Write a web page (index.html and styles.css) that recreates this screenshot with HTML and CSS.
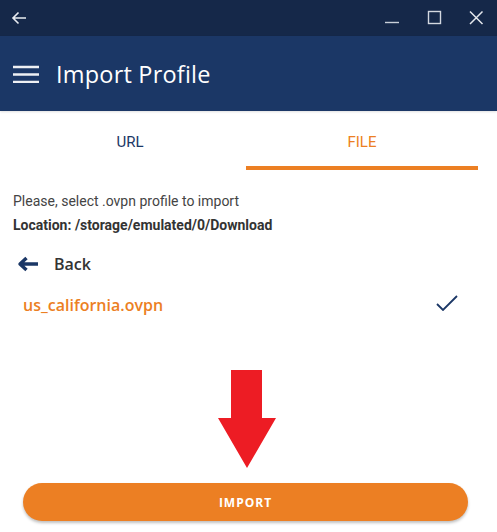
FILE: index.html
```html
<!DOCTYPE html>
<html>
<head>
<meta charset="utf-8">
<link rel="stylesheet" href="styles.css">
</head>
<body>
<div class="app">
  <div class="titlebar">
    <svg class="tb-back" width="16" height="14" viewBox="0 0 16 14"><path d="M15 7H2M7.5 1.5L2 7l5.5 5.5" fill="none" stroke="#e8ebf0" stroke-width="1.6"/></svg>
    <div class="tb-controls">
      <svg width="16" height="16" viewBox="0 0 16 16"><path d="M1 12.5h14" stroke="#c9cfd9" stroke-width="1.4"/></svg>
      <svg width="16" height="16" viewBox="0 0 16 16"><rect x="2.5" y="1.5" width="12" height="12" fill="none" stroke="#d3d8e0" stroke-width="1.4"/></svg>
      <svg width="16" height="16" viewBox="0 0 16 16"><path d="M2 1.5l12.5 12.5M14.5 1.5L2 14" stroke="#e4e7ec" stroke-width="1.5"/></svg>
    </div>
  </div>
  <div class="appbar">
    <svg class="menu" width="26" height="18" viewBox="0 0 26 18"><path d="M0 2h26M0 9.5h26M0 17h26" stroke="#eef0f4" stroke-width="2.6"/></svg>
    <h1 class="title">Import Profile</h1>
  </div>
  <div class="tabs">
    <div class="tab">URL</div>
    <div class="tab active">FILE</div>
  </div>
  <div class="content">
    <p class="hint">Please, select .ovpn profile to import</p>
    <p class="location">Location: /storage/emulated/0/Download</p>
    <div class="back-row">
      <svg width="22" height="16" viewBox="0 0 22 16"><path d="M21 8H4M9.5 2L3 8l6.5 6" fill="none" stroke="#1b3766" stroke-width="3.4" stroke-linejoin="round"/></svg>
      <span>Back</span>
    </div>
    <div class="file-row">
      <span class="file-name">us_california.ovpn</span>
      <svg class="check" width="22" height="16" viewBox="0 0 22 16"><path d="M1 9l6 6L21 1" fill="none" stroke="#1b3766" stroke-width="1.8"/></svg>
    </div>
  </div>
  <div class="pointer">
    <svg width="60" height="100" viewBox="0 0 60 100"><path d="M14 0h31v48h14L30 98 1 48h13z" fill="#ed1c24"/></svg>
  </div>
  <div class="actions">
    <button class="import">IMPORT</button>
  </div>
</div>
</body>
</html>
```

FILE: styles.css
```css
* { box-sizing: border-box; }
html, body { margin: 0; padding: 0; background: #fff; }
body { font-family: Roboto, "Noto Sans", sans-serif; }
.app { height: 532px; display: flex; flex-direction: column; }
.titlebar {
  height: 36px; background: #152849;
  display: flex; align-items: center; justify-content: space-between;
  padding: 0 13px 0 11px;
}
.tb-controls { display: flex; gap: 26px; align-items: center; }
.appbar {
  height: 75px; background: #1b3766;
  display: flex; align-items: center; gap: 17px;
  padding: 0 13px;
  box-shadow: 0 1px 2px rgba(0,0,0,0.12);
}
.title {
  margin: 0; color: #fff; font-family: "Open Sans", sans-serif;
  font-weight: 500; font-size: 23.5px; line-height: 30px; letter-spacing: 0.2px;
}
.tabs { display: flex; padding: 0 19px 0 14px; }
.tab {
  flex: 1; text-align: center; height: 59px; padding-top: 22px;
  font-size: 15px; line-height: 18px; color: #1b3766; border-bottom: 4px solid transparent;
}
.tab.active { color: #ec7f23; border-bottom-color: #ec7f23; }
.content { padding: 0 13px; }
.hint { margin: 23px 0 0; font-size: 14px; line-height: 16px; color: #444; }
.location { margin: 8px 0 0; font-size: 14px; line-height: 16px; font-weight: 700; color: #333; }
.back-row { display: flex; align-items: center; gap: 15px; margin-top: 21px; padding-left: 4px; height: 20px; }
.back-row svg { display: block; }
.back-row span { font-family: "Open Sans", sans-serif; font-weight: 600; font-size: 16px; line-height: 20px; color: #333; }
.file-row { display: flex; align-items: center; justify-content: space-between; margin-top: 21px; padding: 0 26px 0 10px; height: 20px; }
.file-row svg { display: block; margin-top: -4px; }
.file-name { font-family: "Open Sans", sans-serif; font-weight: 600; font-size: 16px; line-height: 20px; color: #ec7f23; }
.pointer { flex: 1; display: flex; justify-content: center; align-items: flex-end; padding-bottom: 13px; padding-right: 4px; }
.pointer svg { display: block; }
.actions { padding: 0 29px 11px 23px; }
.import {
  width: 100%; height: 38px; border: 0; border-radius: 19px;
  background: #ec7f23; color: #fff;
  font-family: "Open Sans", sans-serif; font-weight: 700; font-size: 12px; letter-spacing: 1px;
  box-shadow: 0 2px 3px rgba(0,0,0,0.25);
}
```
